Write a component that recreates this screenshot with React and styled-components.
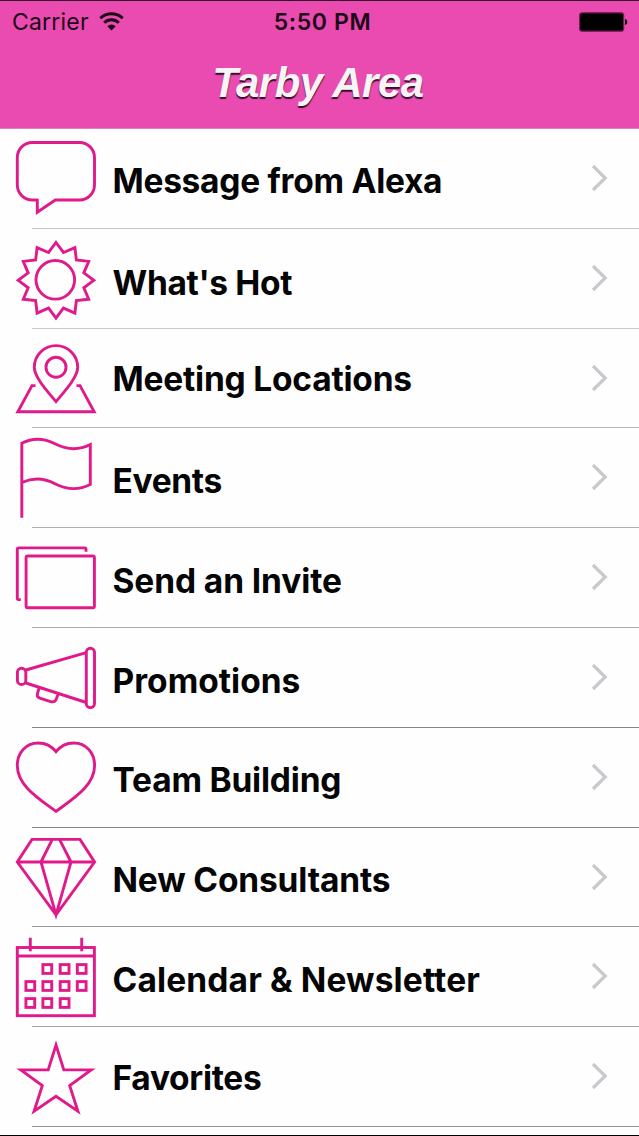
import React from "react";
import styled, { createGlobalStyle } from "styled-components";

const GlobalStyle = createGlobalStyle`
  * {
    box-sizing: border-box;
  }

  body {
    margin: 0;
    background: #fefefe;
    font-family: Inter, "Liberation Sans", sans-serif;
  }
`;

const Screen = styled.div`
  display: flex;
  flex-direction: column;
  width: 639px;
  height: 1136px;
  overflow: hidden;
  background: #fefefe;
  border-bottom: 1px solid #000;
`;

const Header = styled.header`
  height: 129px;
  background: #e94bb1;
  border-top: 1px solid #35082a;
  border-bottom: 1px solid #dc83b8;
`;

const StatusBar = styled.div`
  display: grid;
  grid-template-columns: 1fr auto 1fr;
  align-items: center;
  height: 41px;
  padding: 0 11px 0 12px;
  color: #1c0615;
  font-size: 23px;
`;

const Carrier = styled.div`
  display: flex;
  align-items: center;
  gap: 10px;
  letter-spacing: 0.2px;
`;

const Time = styled.div`
  padding-left: 5px;
  font-weight: 600;
  letter-spacing: 0.6px;
`;

const BatteryIcon = styled.svg`
  justify-self: end;
`;

const Title = styled.h1`
  margin: 0;
  padding-right: 3px;
  height: 82px;
  line-height: 82px;
  text-align: center;
  color: #f8f4f6;
  font-family: "Liberation Sans", sans-serif;
  font-size: 42px;
  font-weight: bold;
  font-style: italic;
  letter-spacing: -0.5px;
  text-shadow: 0 2px 1px #32102a;
`;

const List = styled.ul`
  margin: 0;
  padding: 0;
  list-style: none;
`;

const Row = styled.li`
  display: flex;
  height: 99.8px;
`;

const RowIcon = styled.svg`
  flex: none;
  width: 112px;
  height: 99px;
  margin-right: -80px;
  fill: none;
  stroke: #e01a8a;
  stroke-width: 2.9;
`;

const RowBody = styled.div`
  flex: 1;
  display: flex;
  justify-content: space-between;
  padding: 0 31px 0 80.5px;
  border-bottom: 1px solid ${(props) => props.$line};
`;

const Label = styled.span`
  padding-top: ${(props) => props.$top}px;
  color: #050505;
  font-size: 33.5px;
  font-weight: 700;
  line-height: 40px;
  letter-spacing: ${(props) => props.$spacing}px;
  white-space: nowrap;
`;

const Chevron = styled.svg`
  flex: none;
  margin-top: 35px;
  fill: none;
  stroke: #c9c8cc;
  stroke-width: 3.2;
`;

const sunPoints = Array.from({ length: 24 }, (_, i) => {
  const radius = i % 2 ? 28.8 : 37.8;
  const angle = (i * Math.PI) / 12;
  return `${56 + radius * Math.sin(angle)},${51.3 - radius * Math.cos(angle)}`;
}).join(" ");

const calendarDays = [
  [47.3, 41.6], [64.6, 41.6], [81.7, 41.6],
  [30.3, 58.6], [47.3, 58.6], [64.6, 58.6], [81.7, 58.6],
  [30.3, 75.6], [47.3, 75.6], [64.6, 75.6],
];

const icons = {
  message: (
    <path d="M37.3 71H32.3a15 15 0 0 1-15-15V28.5a15 15 0 0 1 15-15h47.2a15 15 0 0 1 15 15V56a15 15 0 0 1-15 15H55.3L37.3 83.2V69.8" />
  ),
  sun: (
    <>
      <polygon points={sunPoints} />
      <circle cx="55.3" cy="50.8" r="19.3" />
    </>
  ),
  pin: (
    <>
      <path d="M56 72.6C48 63 34.3 48.5 34.3 38.3a21.7 21.7 0 0 1 43.4 0C77.7 48.5 64 63 56 72.6Z" />
      <circle cx="56" cy="38.2" r="10" />
      <path d="M35.5 56.6H32L17.8 82.7H94.2L80 56.6H76.5" />
    </>
  ),
  flag: (
    <path d="M21.8 89.8V15.2C32 10 44 10 55 15.8C67 22 79 22.3 90.3 16.5V56.5C79 62.2 67 61.9 55 55.7C44 49.9 32 49.9 21.8 54.5" />
  ),
  invite: (
    <>
      <rect x="26.1" y="28" width="68.3" height="51.8" rx="1.5" />
      <path d="M20.8 71.6H18.5Q17.3 71.6 17.3 70.3V21.3Q17.3 19.9 18.7 19.9H84.7Q86 19.9 86 21.2V23.7" />
    </>
  ),
  megaphone: (
    <>
      <rect x="86.3" y="20.2" width="8.2" height="59.4" rx="4.1" />
      <rect x="17.4" y="40.2" width="8.4" height="16.3" rx="4.1" />
      <path d="M25.8 42L86.3 24.7M25.8 55L86.3 74.5M39.2 60L37.4 65.5Q36.4 69 39.8 70.2L49.8 73.4Q54.8 74.8 56 71.8L58.2 66" />
    </>
  ),
  heart: (
    <path d="M56 23.7C51.5 18 46 15 38.2 15C26 15 17.3 24.7 17.3 37.5C17.3 57.5 38 70 56 83.4C74 70 94.6 57.5 94.6 37.5C94.6 24.7 86 15 73.8 15C66 15 60.5 18 56 23.7Z" />
  ),
  diamond: (
    <path d="M32 11.4H80L94.6 34L56 86.8L17.3 34ZM17.3 34H94.6M52.3 11.4L41 34L56 86.8L71 34L59.5 11.4" />
  ),
  calendar: (
    <>
      <rect x="17.3" y="20.5" width="77.1" height="68.2" />
      <path d="M17.3 29H94.4M30.3 10.7V24.3M81.7 10.7V24.3" />
      {calendarDays.map(([x, y]) => (
        <rect key={`${x}-${y}`} x={x - 4.4} y={y - 4} width="8.8" height="8.8" />
      ))}
    </>
  ),
  star: (
    <path d="M56 18L63.8 42.9H91.2L69.7 58.6L77.9 84.2L56 69.3L34.1 84.2L42.3 58.6L20.8 42.9H48.2Z" />
  ),
};

const MENU = [
  { icon: "message", label: "Message from Alexa", top: 32, spacing: -0.27, line: "#c5c5c7" },
  { icon: "sun", label: "What's Hot", top: 34.5, spacing: -0.33, line: "#cbcbcd" },
  { icon: "pin", label: "Meeting Locations", top: 30.5, spacing: -0.21, line: "#bababd" },
  { icon: "flag", label: "Events", top: 33, spacing: -0.35, line: "#b0b0b5" },
  { icon: "invite", label: "Send an Invite", top: 33, spacing: -0.1, line: "#aaaaae" },
  { icon: "megaphone", label: "Promotions", top: 33, spacing: 0.02, line: "#858588" },
  { icon: "heart", label: "Team Building", top: 32.5, spacing: -0.2, line: "#88888a" },
  { icon: "diamond", label: "New Consultants", top: 32.5, spacing: -0.16, line: "#98989a" },
  { icon: "calendar", label: "Calendar & Newsletter", top: 33, spacing: 0.14, line: "#a2a2a4" },
  { icon: "star", label: "Favorites", top: 31, spacing: -0.3, line: "#939395" },
];

function Wifi() {
  return (
    <svg width="25" height="20" viewBox="0 0 25 20" fill="none" stroke="#1c0615" strokeWidth="3">
      <path d="M1.3 6.2A16 16 0 0 1 23.7 6.2M5.2 10.7A10.4 10.4 0 0 1 19.8 10.7" />
      <path d="M8.3 14.3Q12.5 10.9 16.7 14.3L12.5 18.6Z" fill="#1c0615" stroke="none" />
    </svg>
  );
}

function Battery() {
  return (
    <BatteryIcon width="49" height="20" viewBox="0 0 49 20">
      <rect x="0.6" y="0.8" width="44" height="18.4" rx="2.5" stroke="#751b58" strokeWidth="1.2" />
      <rect x="2" y="2" width="41.4" height="16" rx="1" />
      <path d="M46 7Q48.3 7.6 48.3 10T46 13Z" />
    </BatteryIcon>
  );
}

function MenuRow({ item }) {
  return (
    <Row>
      <RowIcon viewBox="0 0 112 99">{icons[item.icon]}</RowIcon>
      <RowBody $line={item.line}>
        <Label $top={item.top} $spacing={item.spacing}>
          {item.label}
        </Label>
        <Chevron width="17" height="28" viewBox="0 0 17 28">
          <path d="M2 2L14.2 14L2 26" />
        </Chevron>
      </RowBody>
    </Row>
  );
}

function App() {
  return (
    <>
      <GlobalStyle />
      <Screen>
        <Header>
          <StatusBar>
            <Carrier>
              Carrier
              <Wifi />
            </Carrier>
            <Time>5:50 PM</Time>
            <Battery />
          </StatusBar>
          <Title>Tarby Area</Title>
        </Header>
        <List>
          {MENU.map((item) => (
            <MenuRow key={item.label} item={item} />
          ))}
        </List>
      </Screen>
    </>
  );
}

export default App;
